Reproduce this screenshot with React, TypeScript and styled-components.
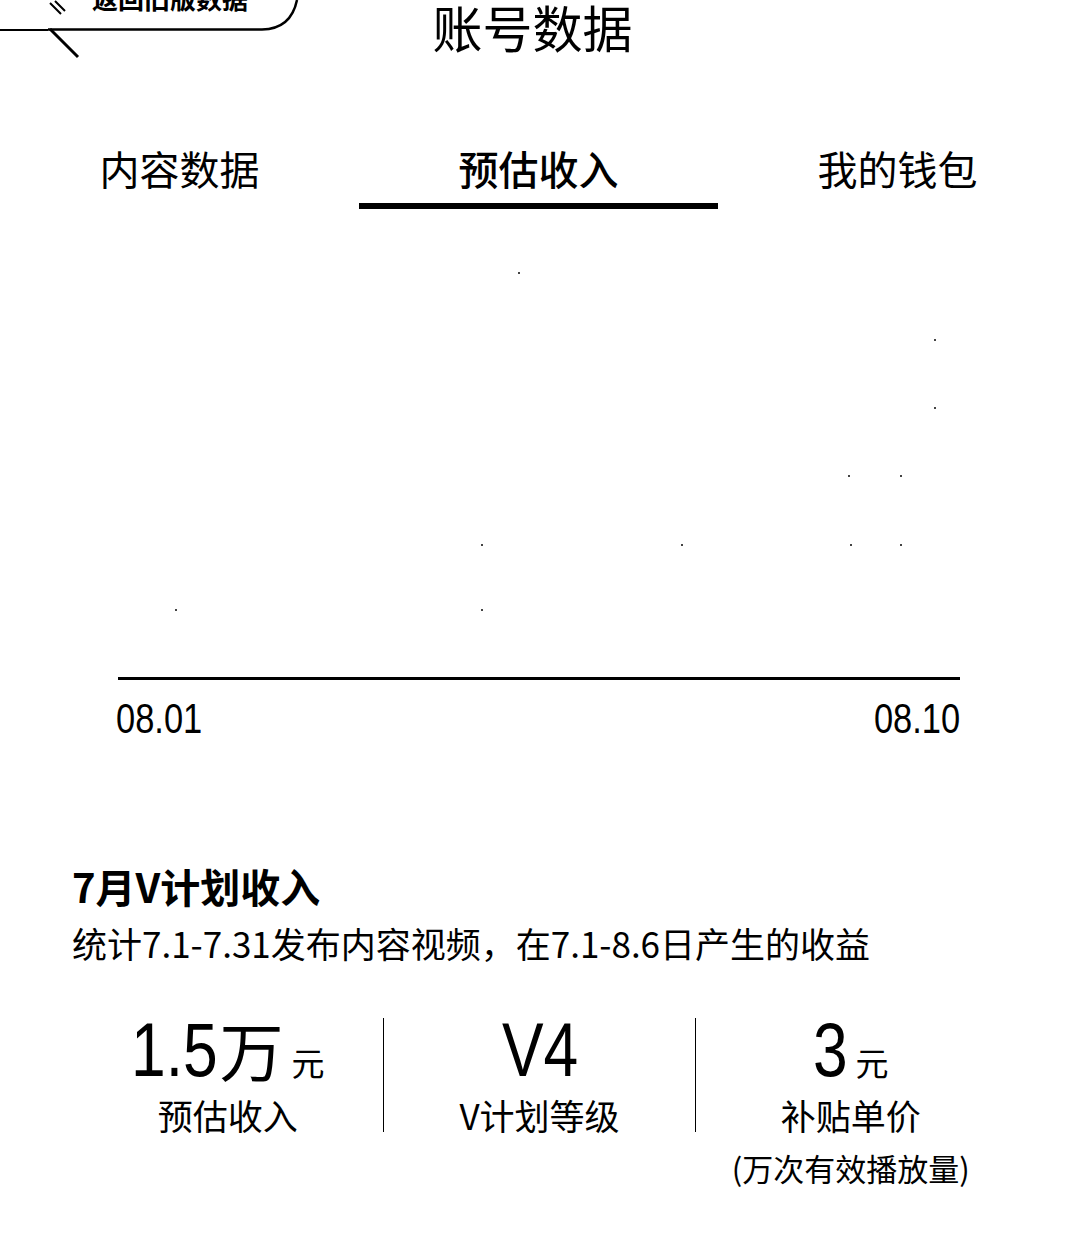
import styled, { createGlobalStyle } from "styled-components";

const GlobalStyle = createGlobalStyle`
  body {
    margin: 0;
    background: #fff;
    color: #000;
    font-family: "Noto Sans CJK SC", "Noto Sans", sans-serif;
  }
`;

const NUM_FONT = `"Liberation Sans", Arial, sans-serif`;

const Page = styled.div`
  position: relative;
  width: 1065px;
  min-height: 1256px;
  overflow: hidden;
`;

const Header = styled.header`
  height: 60px;
  display: flex;
  justify-content: center;
  align-items: flex-start;
`;

const Title = styled.h1`
  margin: 0;
  font-size: 50px;
  line-height: 52px;
  font-weight: 400;
`;

const OldVersion = styled.div`
  position: absolute;
  top: 0;
  left: 0;
  width: 300px;
  height: 60px;
`;

const OldVersionText = styled.span`
  position: absolute;
  top: -15px;
  left: 92px;
  font-size: 26px;
  line-height: 26px;
  font-weight: 700;
  white-space: nowrap;
`;

const Tabs = styled.nav`
  display: grid;
  grid-template-columns: repeat(3, 359px);
  margin-top: 84px;
`;

const Tab = styled.div<{ $active?: boolean }>`
  text-align: center;
  font-size: 40px;
  line-height: 48px;
  font-weight: ${(p) => (p.$active ? 500 : 400)};
  padding-bottom: 11px;
  border-bottom: 6px solid ${(p) => (p.$active ? "#000" : "transparent")};
`;

const Chart = styled.section`
  margin: 0 105px 0 118px;
`;

const Plot = styled.div`
  height: 468px;
  border-bottom: 3px solid #000;
`;

const Axis = styled.div`
  display: flex;
  justify-content: space-between;
  margin: 18px 0 0 -2px;
  font-family: ${NUM_FONT};
  font-size: 42px;
  line-height: 42px;
`;

const AxisLabel = styled.span<{ $end?: boolean }>`
  display: inline-block;
  transform: scaleX(0.82);
  transform-origin: ${(p) => (p.$end ? "right" : "left")} center;
`;

const Summary = styled.section`
  padding: 0 59px 0 72px;
  margin-top: 122px;
`;

const SectionTitle = styled.h2`
  margin: 0;
  font-size: 40px;
  line-height: 48px;
  font-weight: 700;
`;

const SectionNote = styled.p`
  margin: 12px 0 0;
  font-size: 35px;
  line-height: 42px;
`;

const Stats = styled.div`
  display: grid;
  grid-template-columns: repeat(3, 1fr);
  margin-top: 54px;
`;

const Stat = styled.div<{ $divider?: boolean }>`
  display: flex;
  flex-direction: column;
  align-items: center;
  border-left: ${(p) => (p.$divider ? "1px solid #000" : "none")};
  height: 114px;
`;

const Value = styled.div`
  display: flex;
  align-items: baseline;
  height: 76px;
  margin-top: -6px;
  font-family: ${NUM_FONT};
  font-size: 76px;
  line-height: 76px;
  white-space: nowrap;
`;

const Num = styled.span<{ $trim: number }>`
  display: inline-block;
  transform: scaleX(0.82);
  transform-origin: left center;
  margin-right: ${(p) => -p.$trim}px;
`;

const BigUnit = styled.span`
  font-family: "Noto Sans CJK SC", sans-serif;
  font-size: 64px;
  line-height: 1;
  margin-left: 2px;
`;

const SmallUnit = styled.span`
  font-family: "Noto Sans CJK SC", sans-serif;
  font-size: 33px;
  line-height: 1;
  margin-left: 8px;
`;

const Label = styled.div`
  margin-top: 6px;
  font-size: 35px;
  line-height: 42px;
  white-space: nowrap;
`;

const Hint = styled.div`
  margin-top: 12px;
  font-size: 31px;
  line-height: 40px;
  white-space: nowrap;
`;

const dots: [number, number][] = [
  [400, 63],
  [816, 130],
  [816, 198],
  [730, 266],
  [782, 266],
  [363, 335],
  [563, 335],
  [732, 335],
  [782, 335],
  [57, 400],
  [363, 400],
];

function App() {
  return (
    <Page>
      <GlobalStyle />
      <OldVersion>
        <svg width="300" height="60" viewBox="0 0 300 60" fill="none" stroke="#000">
          <path d="M0 30 H48" strokeWidth="2" />
          <path d="M48 29.5 H262 Q291 29 297 0" strokeWidth="2.5" />
          <path d="M50 29 L78 57" strokeWidth="3" />
          <path d="M50 3 L61 14 M55 1 L65 11" strokeWidth="2" />
        </svg>
        <OldVersionText>返回旧版数据</OldVersionText>
      </OldVersion>

      <Header>
        <Title>账号数据</Title>
      </Header>

      <Tabs>
        <Tab>内容数据</Tab>
        <Tab $active>预估收入</Tab>
        <Tab>我的钱包</Tab>
      </Tabs>

      <Chart>
        <Plot>
          <svg width="842" height="468" viewBox="0 0 842 468">
            {dots.map(([x, y], i) => (
              <rect key={i} x={x} y={y} width="2" height="2" fill="#444" />
            ))}
          </svg>
        </Plot>
        <Axis>
          <AxisLabel>08.01</AxisLabel>
          <AxisLabel $end>08.10</AxisLabel>
        </Axis>
      </Chart>

      <Summary>
        <SectionTitle>7月V计划收入</SectionTitle>
        <SectionNote>统计7.1-7.31发布内容视频，在7.1-8.6日产生的收益</SectionNote>

        <Stats>
          <Stat>
            <Value>
              <Num $trim={19}>1.5</Num>
              <BigUnit>万</BigUnit>
              <SmallUnit>元</SmallUnit>
            </Value>
            <Label>预估收入</Label>
          </Stat>
          <Stat $divider>
            <Value>
              <Num $trim={17}>V4</Num>
            </Value>
            <Label>V计划等级</Label>
          </Stat>
          <Stat $divider>
            <Value>
              <Num $trim={8}>3</Num>
              <SmallUnit>元</SmallUnit>
            </Value>
            <Label>补贴单价</Label>
            <Hint>(万次有效播放量)</Hint>
          </Stat>
        </Stats>
      </Summary>
    </Page>
  );
}

export default App;
